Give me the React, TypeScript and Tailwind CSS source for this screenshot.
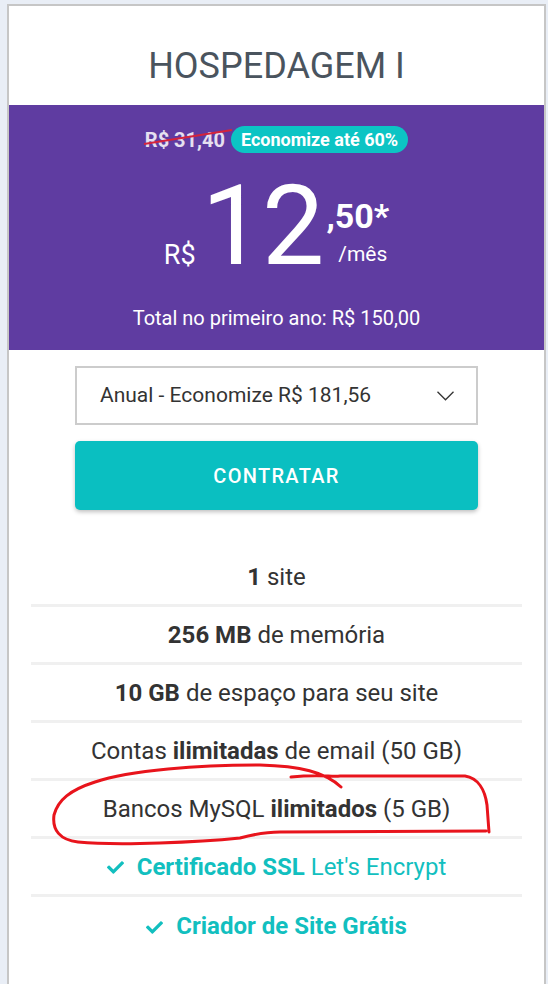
import { FaCheck } from 'react-icons/fa';

type Feature = { bold?: string; before?: string; after?: string; check?: boolean };

const FEATURES: Feature[] = [
  { bold: '1', after: ' site' },
  { bold: '256 MB', after: ' de memória' },
  { bold: '10 GB', after: ' de espaço para seu site' },
  { before: 'Contas ', bold: 'ilimitadas', after: ' de email (50 GB)' },
  { before: 'Bancos MySQL ', bold: 'ilimitados', after: ' (5 GB)' },
  { bold: 'Certificado SSL', after: " Let's Encrypt", check: true },
  { bold: 'Criador de Site Grátis', check: true },
];

function FeatureRow({ f, last }: { f: Feature; last: boolean }) {
  return (
    <li
      className={
        'h-[58px] flex items-center justify-center text-[24px] ' +
        (last ? '' : 'border-b-[3px] border-[#f0f0f0] ') +
        (f.check ? 'text-[#12bfbf]' : 'text-[#333333]')
      }
    >
      {f.check && <FaCheck size={17} className="mr-[13px] mt-[2px] shrink-0" />}
      <span className="whitespace-pre">
        {f.before}
        {f.bold && <b className="font-bold">{f.bold}</b>}
        {f.after}
      </span>
    </li>
  );
}

export default function App() {
  return (
    <div className="relative min-h-[984px] bg-[#e9eef6] pl-[7px] pr-[2px] pt-[4px] font-[family-name:Roboto,sans-serif] overflow-hidden">
      <div className="min-h-[1000px] bg-white border-2 border-[#c6c6c6]">
        <h1 className="pt-[35px] pb-[14px] text-center text-[36px] leading-[50px] text-[#4a545e]">
          HOSPEDAGEM I
        </h1>

        <div className="bg-[#5f3ca1] text-white pt-[21px] pb-[20px]">
          <div className="flex items-center justify-center gap-[6px] h-[27px]">
            <span className="relative text-[20px] font-bold text-[#e6e0f0]">
              R$ 31,40
              <svg className="absolute -left-[2px] top-0 w-[90px] h-[26px]" viewBox="0 0 90 26">
                <path d="M1 19 L89 5" stroke="#d4243c" strokeWidth="2" />
              </svg>
            </span>
            <span className="h-[27px] px-[10px] rounded-full bg-[#0cc4c4] text-[18px] font-bold leading-[27px]">
              Economize até 60%
            </span>
          </div>

          <div className="mt-[18px] flex items-end justify-center">
            <span className="text-[27px] leading-none mb-[13px] mr-[6px]">R$</span>
            <span className="text-[111px] leading-none tracking-[-2px]">12</span>
            <div className="flex flex-col items-center mb-[17px] ml-[4px]">
              <span className="text-[34px] font-bold leading-none mb-[11px]">,50*</span>
              <span className="text-[21px] leading-none pl-[10px]">/mês</span>
            </div>
          </div>

          <p className="mt-[24px] text-center text-[20px] leading-[24px]">Total no primeiro ano: R$ 150,00</p>
        </div>

        <div className="mx-[66px] mt-[16px] h-[59px] border-2 border-[#cccccc] flex items-center justify-between pl-[23px] pr-[22px] text-[21px] text-[#333333]">
          <span>Anual - Economize R$ 181,56</span>
          <svg className="w-[17px] h-[10px]" viewBox="0 0 17 10" fill="none">
            <path d="M0.5 0.8 L8.5 8.8 L16.5 0.8" stroke="#333333" strokeWidth="1.3" />
          </svg>
        </div>

        <button className="mx-[66px] mt-[16px] h-[69px] w-[403px] rounded-[5px] bg-[#0abfc1] text-white text-[20px] font-medium tracking-[1.3px] shadow-[0_2px_4px_rgba(0,0,0,0.25)]">
          CONTRATAR
        </button>

        <ul className="mt-[39px] mx-[22px]">
          {FEATURES.map((f, i) => (
            <FeatureRow key={i} f={f} last={i === FEATURES.length - 1} />
          ))}
        </ul>
      </div>

      <svg className="absolute left-0 top-0 w-[548px] h-[984px] pointer-events-none" viewBox="0 0 548 984" fill="none">
        <path
          d="M341 787 C325 772 300 766 260 765 C200 765 130 770 95 782 C70 790 58 800 54 815 C52 830 60 840 78 842 C120 846 200 842 240 838 C255 834 265 832 280 832 L486 831 M291 777 C320 774 330 777 340 776 L465 776 C478 778 485 790 487 805 L489 832"
          stroke="#e8141c"
          strokeWidth="3"
          strokeLinecap="round"
          strokeLinejoin="round"
        />
      </svg>
    </div>
  );
}
